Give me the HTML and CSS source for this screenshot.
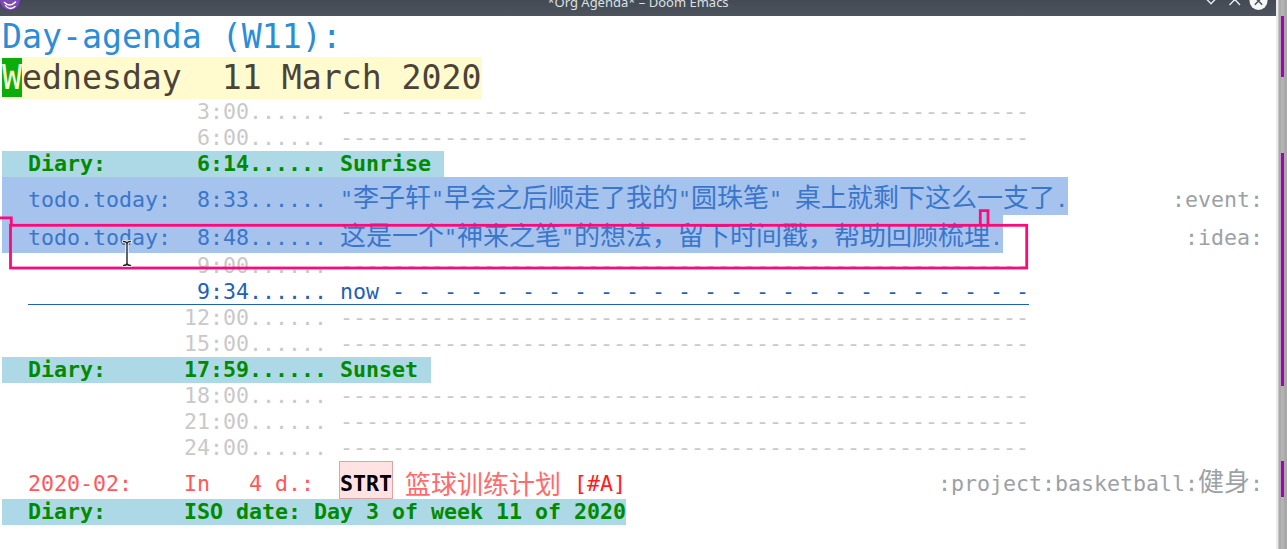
FILE: index.html
```html
<!DOCTYPE html>
<html lang="zh-CN">
<head>
<meta charset="utf-8">
<title>*Org Agenda* – Doom Emacs</title>
<link rel="stylesheet" href="styles.css">
</head>
<body>
<div class="screen">
  <div class="window">
    <header class="titlebar">
      <div class="tb-left">
        <svg class="app-icon" width="21" height="16" viewBox="0 0 21 16">
          <circle cx="10" cy="0" r="10.5" fill="#7c4db5"/>
          <circle cx="10" cy="0" r="10.5" fill="none" stroke="#5b3392" stroke-width="1"/>
          <path d="M4.5 2.5 C 8 6, 12 5.5, 15.5 2" fill="none" stroke="#ffffff" stroke-width="1.6" stroke-linecap="round"/>
          <path d="M5.5 5.5 C 8 9.5, 12.5 9, 15 6.5" fill="none" stroke="#ffffff" stroke-width="1.4" stroke-linecap="round"/>
        </svg>
      </div>
      <div class="title">*Org Agenda* – Doom Emacs</div>
      <div class="tb-right">
        <svg class="controls" width="64" height="16" viewBox="1204 0 64 16">
          <path d="M1205.5 -2 L1211 3.8 L1216.5 -2" fill="none" stroke="#e9ecef" stroke-width="1.4"/>
          <path d="M1229.5 5 L1234.8 -0.5 L1240 5" fill="none" stroke="#e9ecef" stroke-width="1.4"/>
          <circle cx="1258.5" cy="1" r="9" fill="#f5f6f7"/>
          <path d="M1254.8 -2.7 L1262.2 4.7 M1262.2 -2.7 L1254.8 4.7" stroke="#4a5058" stroke-width="1.5"/>
        </svg>
      </div>
    </header>

    <main class="agenda">
      <div class="heading"><span>Day-agenda (W11):</span></div>
      <div class="date"><span class="date-band"><span class="cursor">W</span>ednesday  11 March 2020</span></div>

      <div class="row"><span class="grid">               3:00...... -----------------------------------------------------</span></div>
      <div class="row"><span class="grid">               6:00...... -----------------------------------------------------</span></div>
      <div class="row"><span class="diary">  Diary:       6:14...... Sunrise </span></div>
      <div class="row tall"><span class="todo">  todo.today:  8:33...... "<span class="cjk">李子轩</span>"<span class="cjk">早会之后顺走了我的</span>"<span class="cjk">圆珠笔</span>" <span class="cjk">桌上就剩下这么一支了</span>.</span><span class="tags">:event:</span></div>
      <div class="row tall"><span class="todo">  todo.today:  8:48...... <span class="cjk">这是一个</span>"<span class="cjk">神来之笔</span>"<span class="cjk">的想法，留下时间戳，帮助回顾梳理</span>.</span><span class="tags">:idea:</span></div>
      <div class="row"><span class="grid">               9:00...... -----------------------------------------------------</span></div>
      <div class="row"><span>  </span><span class="now">             9:34...... now - - - - - - - - - - - - - - - - - - - - - - - - -</span></div>
      <div class="row"><span class="grid">              12:00...... -----------------------------------------------------</span></div>
      <div class="row"><span class="grid">              15:00...... -----------------------------------------------------</span></div>
      <div class="row"><span class="diary">  Diary:      17:59...... Sunset </span></div>
      <div class="row"><span class="grid">              18:00...... -----------------------------------------------------</span></div>
      <div class="row"><span class="grid">              21:00...... -----------------------------------------------------</span></div>
      <div class="row"><span class="grid">              24:00...... -----------------------------------------------------</span></div>
      <div class="row tall"><span class="late">  2020-02:    In   4 d.:  </span><span class="strt">STRT</span><span> </span><span class="headline cjk-item">篮球训练计划</span><span> </span><span class="prio">[#A]</span><span class="tags">:project:basketball:<span class="cjk">健身</span>:</span></div>
      <div class="row"><span class="diary">  Diary:      ISO date: Day 3 of week 11 of 2020</span></div>
    </main>

    <svg class="overlay" width="1276" height="549" viewBox="0 0 1276 549">
      <g fill="none" stroke="#fd0a79" stroke-width="2.8">
        <rect x="10.5" y="225.3" width="1016.2" height="42.7"/>
        <path d="M0 217.8 H11.3 V226"/>
        <path d="M980.3 226 V210.7 H988 V226"/>
      </g>
      <g stroke-linecap="round">
        <path d="M123.5 241.5 Q126.5 241.5 127 243.5 Q127.5 241.5 130.5 241.5 M127 243.5 V263.5 M123.5 265.5 Q126.5 265.5 127 263.5 Q127.5 265.5 130.5 265.5" fill="none" stroke="#ffffff" stroke-width="3.2"/>
        <path d="M123.5 241.5 Q126.5 241.5 127 243.5 Q127.5 241.5 130.5 241.5 M127 243.5 V263.5 M123.5 265.5 Q126.5 265.5 127 263.5 Q127.5 265.5 130.5 265.5" fill="none" stroke="#222222" stroke-width="1.4"/>
      </g>
    </svg>
  </div>

  <aside class="strip">
    <div class="lane">
      <div class="mark m1"></div>
      <div class="mark m2"></div>
      <div class="mark m3"></div>
    </div>
  </aside>
</div>
</body>
</html>
```

FILE: styles.css
```css
* {
  box-sizing: border-box;
  margin: 0;
  padding: 0;
}

html,
body {
  width: 1287px;
  height: 549px;
  overflow: hidden;
  background: #ffffff;
}

body {
  font-family: "DejaVu Sans Mono", "Noto Sans CJK SC", monospace;
}

.screen {
  display: flex;
  height: 549px;
}

.window {
  position: relative;
  width: 1276px;
  flex: none;
  display: flex;
  flex-direction: column;
  background: #ffffff;
}

/* ---------- title bar ---------- */
.titlebar {
  height: 16px;
  flex: none;
  background: linear-gradient(#444a53, #4d545d);
  display: grid;
  grid-template-columns: 1fr auto 1fr;
  overflow: hidden;
}

.tb-left {
  display: flex;
  align-items: flex-start;
}

.app-icon {
  display: block;
}

.title {
  font-family: "Noto Sans", sans-serif;
  font-size: 13px;
  line-height: 18px;
  margin-top: -7px;
  color: #dde1e5;
  white-space: nowrap;
}

.tb-right {
  display: flex;
  justify-content: flex-end;
  align-items: flex-start;
}

.controls {
  display: block;
  margin-right: 8px;
}

/* ---------- agenda ---------- */
.agenda {
  flex: 1;
  font-size: 21.6px;
}

.heading,
.date {
  display: flex;
  padding-left: 2px;
  font-size: 33.2px;
}

.heading > span,
.date > span {
  white-space: pre;
}

.heading {
  height: 41px;
  line-height: 41px;
  color: #2b8dd6;
}

.date {
  height: 42px;
  line-height: 42px;
  color: #4b4338;
}

.date-band {
  background: #fffbcf;
}

.cursor {
  background: #0bad0b;
  color: #fffbcf;
}

.row {
  display: flex;
  height: 26px;
  line-height: 26px;
  padding-left: 2px;
}

.row > span {
  white-space: pre;
}

.row.tall {
  height: 38px;
}

.row.tall > span {
  padding-top: 10px;
}

.grid {
  color: #c9c9c9;
}

.diary {
  background: #add8e6;
  color: #008a00;
  font-weight: bold;
}

.todo {
  background: #a6c3ee;
  color: #3a76ca;
}

.now {
  color: #1f61b4;
  border-bottom: 1px solid #1f61b4;
}

.tags {
  margin-left: auto;
  padding-right: 13px;
  color: #9ca1a6;
}

.cjk {
  font-family: "Noto Sans CJK SC", sans-serif;
  font-size: 26px;
  line-height: 16px;
  font-weight: normal;
}

.late {
  color: #ff5858;
}

.row.tall > .strt {
  margin: 0 -1px;
  padding-top: 9px;
  background: #ffe3e3;
  border: 1px solid #dca5a5;
  color: #000000;
  font-weight: bold;
}

.headline {
  color: #ff6b6b;
}

.cjk-item {
  font-family: "Noto Sans CJK SC", sans-serif;
  font-size: 26px;
}

.row.tall > .cjk-item {
  line-height: 26px;
  padding-top: 9px;
}

.prio {
  color: #ff1c1c;
}

/* ---------- annotations over the text ---------- */
.overlay {
  position: absolute;
  top: 0;
  left: 0;
  pointer-events: none;
}

/* ---------- right strip ---------- */
.strip {
  width: 11px;
  flex: none;
  background: linear-gradient(to right, #ececec 0 2px, #c4c4c4 2px 3px, #aaaaaa 3px 5px, #b3b3b3 5px 8px, #a8a8a8 8px 11px);
  display: flex;
  justify-content: flex-start;
}

.lane {
  margin-left: 5px;
  width: 3px;
  display: flex;
  flex-direction: column;
}

.mark {
  background: #a600b8;
}

.m1 {
  margin-top: 16px;
  height: 61px;
}

.m2 {
  margin-top: 76px;
  height: 233px;
}

.m3 {
  margin-top: 75px;
  height: 36px;
}
```
